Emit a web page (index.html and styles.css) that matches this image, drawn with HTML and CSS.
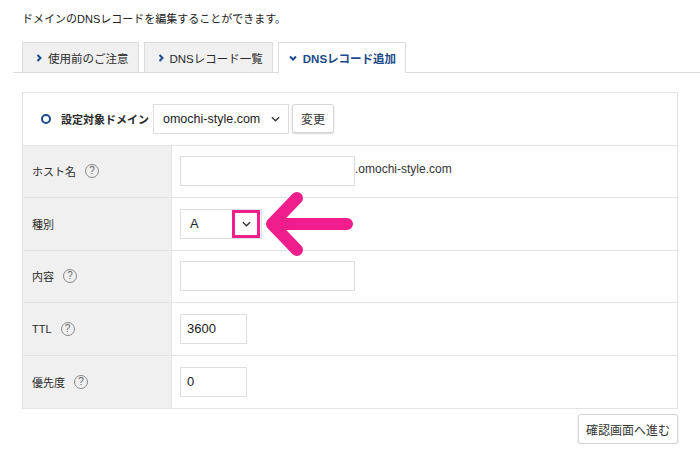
FILE: index.html
```html
<!DOCTYPE html>
<html lang="ja">
<head>
<meta charset="utf-8">
<title>DNSレコード追加</title>
<link rel="stylesheet" href="styles.css">
</head>
<body>
<div class="page">
  <p class="intro">ドメインのDNSレコードを編集することができます。</p>

  <div class="tabs">
    <div class="tab">
      <svg class="chev-right" viewBox="0 0 6 8"><polyline points="1.5,1 4.5,4 1.5,7"/></svg>
      <span>使用前のご注意</span>
    </div>
    <div class="tab">
      <svg class="chev-right" viewBox="0 0 6 8"><polyline points="1.5,1 4.5,4 1.5,7"/></svg>
      <span>DNSレコード一覧</span>
    </div>
    <div class="tab active">
      <svg class="chev-down" viewBox="0 0 8 6"><polyline points="1,1.5 4,4.5 7,1.5"/></svg>
      <span>DNSレコード追加</span>
    </div>
  </div>

  <div class="panel">
    <div class="domain-row">
      <span class="radio"></span>
      <span class="domain-label">設定対象ドメイン</span>
      <div class="select domain-select">
        <span class="select-text">omochi-style.com</span>
        <svg class="select-chev" viewBox="0 0 10 6"><polyline points="1,1 5,5 9,1"/></svg>
      </div>
      <button class="btn change-btn">変更</button>
    </div>

    <div class="row">
      <div class="label">ホスト名<span class="help">?</span></div>
      <div class="value">
        <div class="input wide"></div>
        <span class="suffix">.omochi-style.com</span>
      </div>
    </div>

    <div class="row">
      <div class="label">種別</div>
      <div class="value">
        <div class="select type-select">
          <span class="input-text">A</span>
          <span class="highlight">
            <svg class="select-chev" viewBox="0 0 10 6"><polyline points="1,1 5,5 9,1"/></svg>
          </span>
        </div>
      </div>
    </div>

    <div class="row">
      <div class="label">内容<span class="help">?</span></div>
      <div class="value">
        <div class="input wide"></div>
      </div>
    </div>

    <div class="row">
      <div class="label">TTL<span class="help">?</span></div>
      <div class="value">
        <div class="input short"><span class="input-text">3600</span></div>
      </div>
    </div>

    <div class="row last">
      <div class="label">優先度<span class="help">?</span></div>
      <div class="value">
        <div class="input short"><span class="input-text">0</span></div>
      </div>
    </div>
  </div>

  <div class="actions">
    <button class="btn confirm-btn">確認画面へ進む</button>
  </div>

  <svg class="pointer" viewBox="0 0 100 70">
    <path d="M90 35 H15 M40 9 L15 35 L40 61"/>
  </svg>
</div>
</body>
</html>
```

FILE: styles.css
```css
* {
  box-sizing: border-box;
}

body {
  margin: 0;
  background: #fff;
  color: #2a2a2a;
  font-family: "Liberation Sans", "Noto Sans CJK JP", sans-serif;
  font-size: 11px;
}

.page {
  position: relative;
  padding-top: 11px;
}

.intro {
  margin: 0 0 0 22px;
  line-height: 16px;
  color: #222;
}

/* tabs */
.tabs {
  display: flex;
  gap: 5px;
  height: 31px;
  margin: 15px 0 0 13px;
  padding-left: 9px;
  border-bottom: 1px solid #dcdcdc;
  font-size: 11.5px;
}

.tab {
  display: flex;
  align-items: center;
  gap: 6px;
  padding: 0 9px 0 13px;
  background: #f0f0f0;
  border: 1px solid #dcdcdc;
  border-bottom: none;
  color: #2a2a2a;
}

.tab.active {
  background: #fff;
  height: 31px;
  color: #1c4a8a;
  font-weight: bold;
  padding-left: 10px;
}

.chev-right {
  width: 6px;
  height: 8px;
  fill: none;
  stroke: #1c4a8a;
  stroke-width: 2;
}

.chev-down {
  width: 8px;
  height: 6px;
  fill: none;
  stroke: #1c4a8a;
  stroke-width: 2;
}

/* panel */
.panel {
  margin: 19px 22px 0 22px;
  border: 1px solid #e3e3e3;
}

.domain-row {
  display: flex;
  align-items: center;
  height: 52.5px;
  padding-left: 18px;
  border-bottom: 1px solid #e3e3e3;
}

.radio {
  width: 10px;
  height: 10px;
  border: 2.5px solid #1c4a8a;
  border-radius: 50%;
  margin-right: 10px;
}

.domain-label {
  font-weight: bold;
  margin-right: 4px;
}

.select {
  display: flex;
  align-items: center;
  height: 30px;
  border: 1px solid #dedede;
  background: #fff;
}

.domain-select {
  width: 136px;
  padding: 0 8px 0 9px;
  justify-content: space-between;
  font-size: 12.5px;
  color: #222;
  margin-right: 3px;
}

.select-chev {
  width: 9px;
  height: 6px;
  fill: none;
  stroke: #333;
  stroke-width: 1.4;
}

.btn {
  font-family: "Liberation Sans", "Noto Sans CJK JP", sans-serif;
  font-size: 12px;
  color: #333;
  background: #fff;
  border: 1px solid #d6d6d6;
  border-radius: 3px;
  box-shadow: 0 1px 2px rgba(0, 0, 0, 0.18);
  padding: 0;
}

.change-btn {
  width: 42px;
  height: 29px;
}

/* rows */
.row {
  display: flex;
  height: 52.5px;
  border-bottom: 1px solid #e3e3e3;
}

.row.last {
  border-bottom: none;
}

.label {
  display: flex;
  align-items: center;
  width: 149px;
  padding-left: 9px;
  background: #f0f0f0;
  border-right: 1px solid #e3e3e3;
}

.help {
  display: inline-flex;
  align-items: center;
  justify-content: center;
  width: 14px;
  height: 14px;
  margin-left: 9px;
  border: 1px solid #888;
  border-radius: 50%;
  font-size: 10px;
  color: #666;
  line-height: 1;
}

.value {
  display: flex;
  align-items: center;
  padding-left: 8px;
}

.input {
  display: flex;
  align-items: center;
  height: 30px;
  border: 1px solid #dedede;
  background: #fff;
  padding-left: 6px;
}

.input.wide {
  width: 175px;
}

.input.short {
  width: 67px;
}

.input-text {
  font-size: 13px;
  color: #222;
}

.suffix {
  font-size: 12px;
  color: #333;
  margin-top: -4px;
}

.type-select {
  width: 82px;
  padding-left: 9px;
  justify-content: space-between;
}

.highlight {
  display: flex;
  align-items: center;
  justify-content: center;
  width: 28px;
  height: 28px;
  margin-right: 1px;
  border: 3px solid #f01e8c;
}

/* actions */
.actions {
  display: flex;
  justify-content: flex-end;
  margin: 5px 22px 0 0;
}

.confirm-btn {
  width: 100px;
  height: 30px;
}

/* annotation arrow */
.pointer {
  position: absolute;
  left: 257px;
  top: 189px;
  width: 100px;
  height: 70px;
  fill: none;
  stroke: #f01e8c;
  stroke-width: 12;
  stroke-linecap: round;
  stroke-linejoin: round;
}
```
